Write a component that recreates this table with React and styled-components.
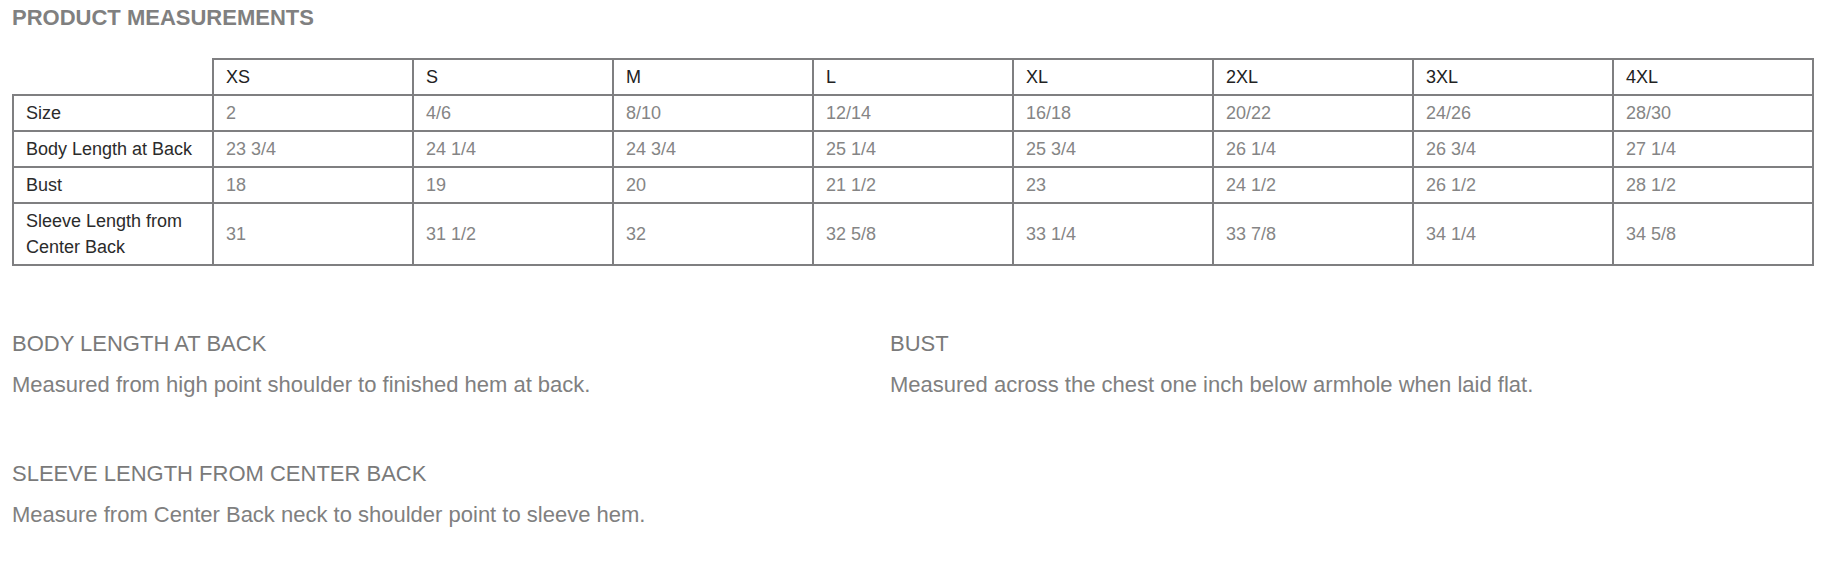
import React from "react"
import styled, { createGlobalStyle } from "styled-components"

const sizes = ["XS", "S", "M", "L", "XL", "2XL", "3XL", "4XL"]

const rows = [
  { label: "Size", values: ["2", "4/6", "8/10", "12/14", "16/18", "20/22", "24/26", "28/30"] },
  { label: "Body Length at Back", values: ["23 3/4", "24 1/4", "24 3/4", "25 1/4", "25 3/4", "26 1/4", "26 3/4", "27 1/4"] },
  { label: "Bust", values: ["18", "19", "20", "21 1/2", "23", "24 1/2", "26 1/2", "28 1/2"] },
  { label: "Sleeve Length from Center Back", values: ["31", "31 1/2", "32", "32 5/8", "33 1/4", "33 7/8", "34 1/4", "34 5/8"] },
]

const notes = [
  { title: "BODY LENGTH AT BACK", text: "Measured from high point shoulder to finished hem at back." },
  { title: "BUST", text: "Measured across the chest one inch below armhole when laid flat." },
  { title: "SLEEVE LENGTH FROM CENTER BACK", text: "Measure from Center Back neck to shoulder point to sleeve hem." },
]

const App = () => {
  return (
    <>
      <GlobalStyle />
      <Page>
        <Title>PRODUCT MEASUREMENTS</Title>
        <SizeTable>
          <thead>
            <tr>
              <Corner />
              {sizes.map(s => (
                <HeadCell key={s}>{s}</HeadCell>
              ))}
            </tr>
          </thead>
          <tbody>
            {rows.map(r => (
              <tr key={r.label}>
                <RowLabel>{r.label}</RowLabel>
                {r.values.map((v, i) => (
                  <ValueCell key={i}>{v}</ValueCell>
                ))}
              </tr>
            ))}
          </tbody>
        </SizeTable>
        <Notes>
          {notes.map(n => (
            <Note key={n.title}>
              <NoteTitle>{n.title}</NoteTitle>
              <NoteText>{n.text}</NoteText>
            </Note>
          ))}
        </Notes>
      </Page>
    </>
  )
}
export default App

const GlobalStyle = createGlobalStyle`
  body {
    margin: 0;
    background: #ffffff;
    font-family: "Liberation Sans", Arial, sans-serif;
  }
`

const Page = styled.div`
  padding: 5px 28px 40px 12px;
`

const Title = styled.h2`
  margin: 0 0 28px 0;
  font-size: 22px;
  line-height: 25px;
  font-weight: bold;
  color: #808080;
`

const SizeTable = styled.table`
  width: 100%;
  table-layout: fixed;
  border-collapse: collapse;
  font-size: 18px;
  line-height: 26px;
`

const Cell = styled.td`
  border: 2px solid #7f7f81;
  padding: 4px 12px;
  text-align: left;
  vertical-align: middle;
  font-weight: normal;
`

const Corner = styled(Cell).attrs({ as: "th" })`
  border-top: none;
  border-left: none;
`

const HeadCell = styled(Cell).attrs({ as: "th" })`
  color: #222222;
`

const RowLabel = styled(Cell)`
  color: #2b2b2b;
`

const ValueCell = styled(Cell)`
  color: #858585;
`

const Notes = styled.div`
  display: grid;
  grid-template-columns: 878px 1fr;
  row-gap: 61px;
  margin-top: 64px;
`

const Note = styled.div``

const NoteTitle = styled.h3`
  margin: 0 0 13px 0;
  font-size: 22px;
  line-height: 28px;
  font-weight: normal;
  color: #7a7a7a;
`

const NoteText = styled.p`
  margin: 0;
  font-size: 22px;
  line-height: 28px;
  color: #808080;
`
